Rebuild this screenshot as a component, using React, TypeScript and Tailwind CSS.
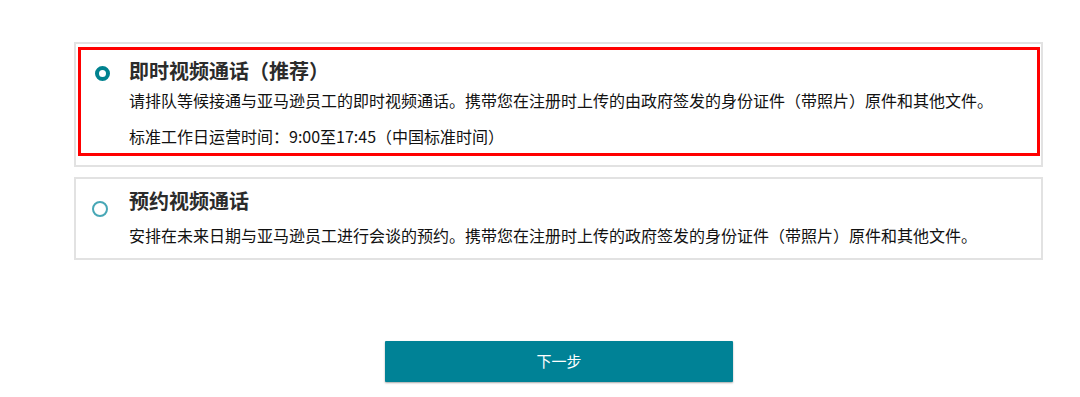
import React from "react";

const font = { fontFamily: '"Noto Sans CJK SC", "Microsoft YaHei", sans-serif' };

function Radio({ checked }: { checked: boolean }) {
  return checked ? (
    <span className="block w-[15px] h-[15px] rounded-full border-[4px] border-[#00828f] bg-white" />
  ) : (
    <span className="block w-[16px] h-[16px] rounded-full border-[2px] border-[#47a7b6] bg-white" />
  );
}

export default function App() {
  return (
    <div
      className="w-[1080px] h-[397px] bg-white text-[#111] overflow-hidden pt-[42px]"
      style={font}
    >
      {/* Card 1 */}
      <div className="ml-[74px] w-[969px] border-2 border-[#e2e2e2] pt-[3px] pl-[2px] pr-[1px] pb-[9px]">
        <div className="border-[3px] border-[#ff0000] h-[109px] pt-[7px] pl-[14px] flex">
          <div className="w-[34px] pt-[9px] shrink-0">
            <Radio checked />
          </div>
          <div className="flex flex-col">
            <div className="text-[20px] leading-[28px] font-bold text-[#2b2b2b]">即时视频通话（推荐）</div>
            <div className="mt-[3px] text-[16px] leading-[24px]">
              请排队等候接通与亚马逊员工的即时视频通话。携带您在注册时上传的由政府签发的身份证件（带照片）原件和其他文件。
            </div>
            <div className="mt-[12px] text-[16px] leading-[24px]">
              标准工作日运营时间：9:00至17:45（中国标准时间）
            </div>
          </div>
        </div>
      </div>

      {/* Card 2 */}
      <div className="mt-[10px] ml-[74px] w-[969px] border-2 border-[#e2e2e2] pt-[8px] pb-[11px] pl-[16px] flex">
        <div className="w-[37px] pt-[14px] shrink-0">
          <Radio checked={false} />
        </div>
        <div className="flex flex-col">
          <div className="text-[20px] leading-[28px] font-bold text-[#2b2b2b]">预约视频通话</div>
          <div className="mt-[8px] text-[16px] leading-[24px]">
            安排在未来日期与亚马逊员工进行会谈的预约。携带您在注册时上传的政府签发的身份证件（带照片）原件和其他文件。
          </div>
        </div>
      </div>

      {/* Button */}
      <div className="mt-[81px] ml-[385px]">
        <button
          type="button"
          className="w-[348px] h-[41px] bg-[#008296] text-white text-[15px] shadow-[0_1px_2px_rgba(0,0,0,0.35)] rounded-[1px] flex items-center justify-center"
          style={font}
        >
          下一步
        </button>
      </div>
    </div>
  );
}
